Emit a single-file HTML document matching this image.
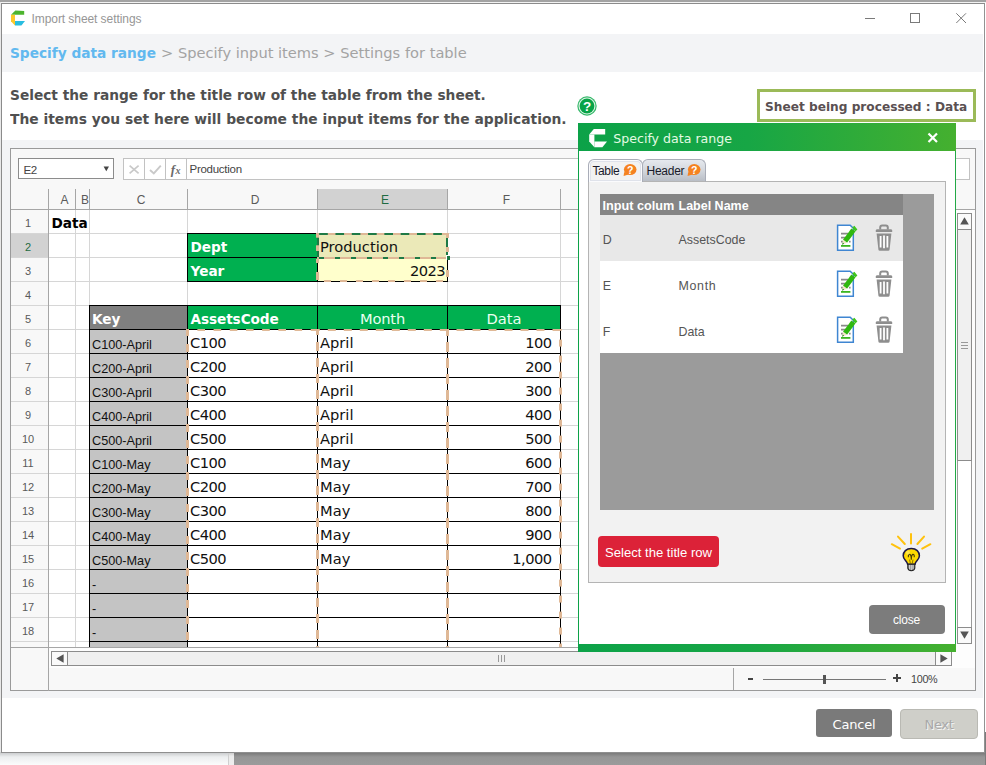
<!DOCTYPE html>
<html lang="en"><head><meta charset="utf-8"><title>Import sheet settings</title>
<style>
*{box-sizing:border-box;margin:0;padding:0}
html,body{width:986px;height:765px;overflow:hidden;background:#fff}
body{position:relative;font-family:"Liberation Sans",sans-serif;font-size:13px;color:#444}
.a{position:absolute}
.t{position:absolute;white-space:pre;line-height:1}
.mb{font-family:"DejaVu Sans","Liberation Sans",sans-serif;font-weight:bold}
.mr{font-family:"DejaVu Sans","Liberation Sans",sans-serif}
.seg{font-family:"Liberation Sans",sans-serif}
#bgtop{left:0;top:0;width:986px;height:2px;background:#a3a3a3}
#bgbot{left:0;top:752px;width:986px;height:13px;background:linear-gradient(#747474,#969696 5px,#9b9b9b)}
#bgbotl{left:0;top:752px;width:228px;height:13px;background:linear-gradient(#c4c6c8,#eceeef 5px,#fbfbfb)}
#bgbotd{left:228px;top:752px;width:6px;height:13px;background:linear-gradient(#c4c4c4,#eaeaea 4px,#efefef);border-left:1px solid #cfcfcf}
#win{left:1px;top:3px;width:984px;height:750px;border:1px solid #8b8b8b;border-right-color:#929292;border-bottom-color:#8f8f8f;background:#fff}
.band{background:#f3f4f6}
#ss{left:10px;top:148px;width:966px;height:543px;border:1px solid #9a9a9a;background:#f8f8f8}
.gl{position:absolute;background:#d6d6d6}
.hl{position:absolute;background:#a6a6a6}
.bk{position:absolute;background:#000}
.dash{position:absolute}
</style></head>
<body>
<div class="a" id="bgtop"></div>
<div class="a" style="left:0;top:2px;width:986px;height:1px;background:#f2f2f2"></div>
<div class="a" style="left:0;top:2px;width:1px;height:750px;background:#e8e8e8"></div>
<div class="a" id="bgbot"></div><div class="a" id="bgbotl"></div><div class="a" id="bgbotd"></div>
<div class="a" style="left:985px;top:732px;width:1px;height:33px;background:#7c7c7c"></div>
<div class="a" id="win"></div>
<svg class="a" style="left:11px;top:10px" width="15" height="16" viewBox="0 0 15 16">
<polygon points="0,4.8 4.4,0.4 13.2,1 13.2,4.8" fill="#4db52e"/>
<polygon points="0,4.8 4,4.8 4,15.4 0,11.2" fill="#fdc92b"/>
<polygon points="4,11 14,11 10.4,15.4 4,15.4" fill="#29bde0"/>
</svg>
<div class="t seg" style="left:31.5px;top:13px;font-size:12px;color:#969696;letter-spacing:-0.07px;">Import sheet settings</div>
<svg class="a" style="left:860px;top:8px" width="112" height="20" viewBox="0 0 112 20">
<path d="M5 10.5H15" stroke="#7a7a7a" stroke-width="1" fill="none"/>
<rect x="50.5" y="5.5" width="9" height="9" stroke="#7a7a7a" stroke-width="1" fill="none"/>
<path d="M96.3 5.3L106 15M106 5.3L96.3 15" stroke="#7a7a7a" stroke-width="1" fill="none"/>
</svg>
<div class="a band" style="left:2px;top:34px;width:981px;height:38px"></div>
<div class="a band" style="left:2px;top:140px;width:981px;height:558px"></div>
<div class="t mb" style="left:10px;top:47px;font-size:13.71px;color:#62b9ef;font-weight:bold;transform:scaleY(1.07);transform-origin:0 11.60px;">Specify data range</div>
<div class="t mr" style="left:161px;top:46px;font-size:14.64px;color:#a3a3a3;">&gt; Specify input items &gt; Settings for table</div>
<div class="t mb" style="left:10px;top:89px;font-size:13.74px;color:#505050;font-weight:bold;transform:scaleY(1.07);transform-origin:0 11.62px;">Select the range for the title row of the table from the sheet.</div>
<div class="t mb" style="left:10px;top:113px;font-size:13.85px;color:#505050;font-weight:bold;transform:scaleY(1.06);transform-origin:0 11.72px;">The items you set here will become the input items for the application.</div>
<svg class="a" style="left:576px;top:95px" width="22" height="22" viewBox="0 0 22 22">
<circle cx="11" cy="11" r="9.7" fill="#35b86a"/><circle cx="11" cy="11" r="8.5" fill="#dff4e6"/><circle cx="11" cy="11" r="7.4" fill="#08a347"/>
<text x="11" y="15.9" text-anchor="middle" font-family="Liberation Sans, sans-serif" font-weight="bold" font-size="13.5" fill="#fff">?</text></svg>
<div class="a" style="left:757px;top:89px;width:219px;height:33px;border:3px solid #9bba58;background:#fff"></div>
<div class="t mb" style="left:765px;top:101px;font-size:12.17px;color:#5a5052;font-weight:bold;">Sheet being processed : Data</div>
<div class="a" id="ss"></div>
<div class="a" style="left:18px;top:158px;width:96px;height:21px;border:1px solid #8c8c8c;background:#fff"></div>
<div class="t seg" style="left:23.5px;top:164px;font-size:11.6px;color:#444;letter-spacing:-0.4px;">E2</div>
<svg class="a" style="left:103px;top:166px" width="7" height="6" viewBox="0 0 7 6"><polygon points="0.6,0.6 6,0.6 3.3,5.2" fill="#444"/></svg>
<div class="a" style="left:123px;top:158px;width:847px;height:22px;border:1px solid #c2c2c2;background:#fff"></div>
<div class="a" style="left:144px;top:159px;width:1px;height:20px;background:#c2c2c2"></div>
<div class="a" style="left:165px;top:159px;width:1px;height:20px;background:#c2c2c2"></div>
<div class="a" style="left:186px;top:159px;width:1px;height:20px;background:#c2c2c2"></div>
<svg class="a" style="left:124px;top:159px" width="62" height="20" viewBox="0 0 62 20">
<path d="M5.6 6.6L14.6 14.4M14.6 6.6L5.6 14.4" stroke="#c9c9c9" stroke-width="1.7" fill="none"/>
<path d="M26 11L29.8 14.4L36.8 6.6" stroke="#c9c9c9" stroke-width="1.9" fill="none"/>
<text x="46.8" y="14.6" font-family="Liberation Serif, serif" font-style="italic" font-weight="bold" font-size="13" fill="#6a6a6a">f</text>
<text x="51.6" y="14.9" font-family="Liberation Serif, serif" font-style="italic" font-weight="bold" font-size="10" fill="#6a6a6a">x</text>
</svg>
<div class="t seg" style="left:189.5px;top:164px;font-size:11.5px;color:#444;letter-spacing:-0.27px;">Production</div>
<div class="a" style="left:49px;top:210px;width:907px;height:437px;background:#fff"></div>
<div class="a" style="left:318px;top:189px;width:129px;height:20px;background:#d2d2d2"></div>
<div class="a" style="left:11px;top:234px;width:37px;height:23px;background:#d2d2d2"></div>
<div class="hl" style="left:48px;top:189px;width:1px;height:20px"></div>
<div class="hl" style="left:75px;top:189px;width:1px;height:20px"></div>
<div class="hl" style="left:89px;top:189px;width:1px;height:20px"></div>
<div class="hl" style="left:187px;top:189px;width:1px;height:20px"></div>
<div class="hl" style="left:317px;top:189px;width:1px;height:20px"></div>
<div class="hl" style="left:447px;top:189px;width:1px;height:20px"></div>
<div class="hl" style="left:560px;top:189px;width:1px;height:20px"></div>
<div class="t seg" style="left:51.5px;top:194px;font-size:12px;color:#5a5a5a;width:26px;text-align:center;">A</div>
<div class="t seg" style="left:78.5px;top:194px;font-size:12px;color:#5a5a5a;width:13px;text-align:center;">B</div>
<div class="t seg" style="left:92.5px;top:194px;font-size:12px;color:#5a5a5a;width:97px;text-align:center;">C</div>
<div class="t seg" style="left:190.5px;top:194px;font-size:12px;color:#5a5a5a;width:129px;text-align:center;">D</div>
<div class="t seg" style="left:320.5px;top:194px;font-size:12px;color:#1f6b42;width:129px;text-align:center;">E</div>
<div class="t seg" style="left:450.5px;top:194px;font-size:12px;color:#5a5a5a;width:112px;text-align:center;">F</div>
<div class="gl" style="left:11px;top:233px;width:945px;height:1px"></div>
<div class="gl" style="left:11px;top:257px;width:945px;height:1px"></div>
<div class="gl" style="left:11px;top:281px;width:945px;height:1px"></div>
<div class="gl" style="left:11px;top:305px;width:945px;height:1px"></div>
<div class="gl" style="left:11px;top:329px;width:945px;height:1px"></div>
<div class="gl" style="left:11px;top:353px;width:945px;height:1px"></div>
<div class="gl" style="left:11px;top:377px;width:945px;height:1px"></div>
<div class="gl" style="left:11px;top:401px;width:945px;height:1px"></div>
<div class="gl" style="left:11px;top:425px;width:945px;height:1px"></div>
<div class="gl" style="left:11px;top:449px;width:945px;height:1px"></div>
<div class="gl" style="left:11px;top:473px;width:945px;height:1px"></div>
<div class="gl" style="left:11px;top:497px;width:945px;height:1px"></div>
<div class="gl" style="left:11px;top:521px;width:945px;height:1px"></div>
<div class="gl" style="left:11px;top:545px;width:945px;height:1px"></div>
<div class="gl" style="left:11px;top:569px;width:945px;height:1px"></div>
<div class="gl" style="left:11px;top:593px;width:945px;height:1px"></div>
<div class="gl" style="left:11px;top:617px;width:945px;height:1px"></div>
<div class="gl" style="left:11px;top:641px;width:945px;height:1px"></div>
<div class="gl" style="left:75px;top:210px;width:1px;height:437px"></div>
<div class="gl" style="left:89px;top:210px;width:1px;height:437px"></div>
<div class="gl" style="left:187px;top:210px;width:1px;height:437px"></div>
<div class="gl" style="left:317px;top:210px;width:1px;height:437px"></div>
<div class="gl" style="left:447px;top:210px;width:1px;height:437px"></div>
<div class="gl" style="left:560px;top:210px;width:1px;height:437px"></div>
<div class="hl" style="left:11px;top:209px;width:964px;height:1px"></div>
<div class="hl" style="left:48px;top:189px;width:1px;height:502px"></div>
<div class="hl" style="left:11px;top:647px;width:945px;height:1px"></div>
<div class="t seg" style="left:9.5px;top:218px;font-size:11px;color:#5a5a5a;width:37px;text-align:center;">1</div>
<div class="t seg" style="left:9.5px;top:242px;font-size:11px;color:#1f6b42;width:37px;text-align:center;">2</div>
<div class="t seg" style="left:9.5px;top:266px;font-size:11px;color:#5a5a5a;width:37px;text-align:center;">3</div>
<div class="t seg" style="left:9.5px;top:290px;font-size:11px;color:#5a5a5a;width:37px;text-align:center;">4</div>
<div class="t seg" style="left:9.5px;top:314px;font-size:11px;color:#5a5a5a;width:37px;text-align:center;">5</div>
<div class="t seg" style="left:9.5px;top:338px;font-size:11px;color:#5a5a5a;width:37px;text-align:center;">6</div>
<div class="t seg" style="left:9.5px;top:362px;font-size:11px;color:#5a5a5a;width:37px;text-align:center;">7</div>
<div class="t seg" style="left:9.5px;top:386px;font-size:11px;color:#5a5a5a;width:37px;text-align:center;">8</div>
<div class="t seg" style="left:9.5px;top:410px;font-size:11px;color:#5a5a5a;width:37px;text-align:center;">9</div>
<div class="t seg" style="left:9.5px;top:434px;font-size:11px;color:#5a5a5a;width:37px;text-align:center;">10</div>
<div class="t seg" style="left:9.5px;top:458px;font-size:11px;color:#5a5a5a;width:37px;text-align:center;">11</div>
<div class="t seg" style="left:9.5px;top:482px;font-size:11px;color:#5a5a5a;width:37px;text-align:center;">12</div>
<div class="t seg" style="left:9.5px;top:506px;font-size:11px;color:#5a5a5a;width:37px;text-align:center;">13</div>
<div class="t seg" style="left:9.5px;top:530px;font-size:11px;color:#5a5a5a;width:37px;text-align:center;">14</div>
<div class="t seg" style="left:9.5px;top:554px;font-size:11px;color:#5a5a5a;width:37px;text-align:center;">15</div>
<div class="t seg" style="left:9.5px;top:578px;font-size:11px;color:#5a5a5a;width:37px;text-align:center;">16</div>
<div class="t seg" style="left:9.5px;top:602px;font-size:11px;color:#5a5a5a;width:37px;text-align:center;">17</div>
<div class="t seg" style="left:9.5px;top:626px;font-size:11px;color:#5a5a5a;width:37px;text-align:center;">18</div>
<div class="t mb" style="left:51.5px;top:217px;font-size:13.66px;color:#000;font-weight:bold;transform:scaleY(1.06);transform-origin:0 11.56px;">Data</div>
<div class="a" style="left:187px;top:233px;width:261px;height:49px;background:#000"></div>
<div class="a" style="left:188px;top:234px;width:129px;height:23px;background:#00b050"></div>
<div class="a" style="left:188px;top:258px;width:129px;height:23px;background:#00b050"></div>
<div class="t mb" style="left:190.5px;top:241px;font-size:13.66px;color:#fff;font-weight:bold;transform:scaleY(1.06);transform-origin:0 11.56px;">Dept</div>
<div class="t mb" style="left:190.5px;top:265px;font-size:13.66px;color:#fff;font-weight:bold;transform:scaleY(1.06);transform-origin:0 11.56px;">Year</div>
<div class="a" style="left:318px;top:234px;width:129px;height:23px;background:#ebe9b8"></div>
<div class="a" style="left:318px;top:258px;width:129px;height:23px;background:#ffffcc"></div>
<div class="t mr" style="left:320px;top:240px;font-size:14.66px;color:#111;">Production</div>
<div class="t mr" style="left:344px;top:264px;font-size:14.66px;color:#111;letter-spacing:-0.6px;width:101px;text-align:right;">2023</div>
<div class="a" style="left:89px;top:305px;width:472px;height:25px;background:#000"></div>
<div class="a" style="left:90px;top:306px;width:97px;height:23px;background:#808080"></div>
<div class="a" style="left:188px;top:306px;width:129px;height:23px;background:#00b050"></div>
<div class="a" style="left:318px;top:306px;width:129px;height:23px;background:#00b050"></div>
<div class="a" style="left:448px;top:306px;width:112px;height:23px;background:#00b050"></div>
<div class="t mb" style="left:92px;top:313px;font-size:13.66px;color:#fff;font-weight:bold;transform:scaleY(1.06);transform-origin:0 11.56px;">Key</div>
<div class="t mb" style="left:190.5px;top:313px;font-size:13.66px;color:#fff;font-weight:bold;letter-spacing:-0.1px;transform:scaleY(1.06);transform-origin:0 11.56px;">AssetsCode</div>
<div class="t mr" style="left:318px;top:312px;font-size:14.66px;color:#eafff0;letter-spacing:-0.2px;width:129px;text-align:center;">Month</div>
<div class="t mr" style="left:448px;top:312px;font-size:14.66px;color:#eafff0;width:112px;text-align:center;">Data</div>
<div class="a" style="left:89px;top:329px;width:472px;height:318px;background:#000"></div>
<div class="a" style="left:90px;top:330px;width:97px;height:23px;background:#c4c4c4"></div>
<div class="a" style="left:188px;top:330px;width:129px;height:23px;background:#fff"></div>
<div class="a" style="left:318px;top:330px;width:129px;height:23px;background:#fff"></div>
<div class="a" style="left:448px;top:330px;width:112px;height:23px;background:#fff"></div>
<div class="t seg" style="left:92px;top:339px;font-size:12.7px;color:#111;">C100-April</div>
<div class="t mr" style="left:190px;top:336px;font-size:14.66px;color:#111;letter-spacing:-0.55px;">C100</div>
<div class="t mr" style="left:320px;top:336px;font-size:14.66px;color:#111;">April</div>
<div class="t mr" style="left:448px;top:336px;font-size:14.66px;color:#111;letter-spacing:-0.55px;width:103.5px;text-align:right;">100</div>
<div class="a" style="left:90px;top:354px;width:97px;height:23px;background:#c4c4c4"></div>
<div class="a" style="left:188px;top:354px;width:129px;height:23px;background:#fff"></div>
<div class="a" style="left:318px;top:354px;width:129px;height:23px;background:#fff"></div>
<div class="a" style="left:448px;top:354px;width:112px;height:23px;background:#fff"></div>
<div class="t seg" style="left:92px;top:363px;font-size:12.7px;color:#111;">C200-April</div>
<div class="t mr" style="left:190px;top:360px;font-size:14.66px;color:#111;letter-spacing:-0.55px;">C200</div>
<div class="t mr" style="left:320px;top:360px;font-size:14.66px;color:#111;">April</div>
<div class="t mr" style="left:448px;top:360px;font-size:14.66px;color:#111;letter-spacing:-0.55px;width:103.5px;text-align:right;">200</div>
<div class="a" style="left:90px;top:378px;width:97px;height:23px;background:#c4c4c4"></div>
<div class="a" style="left:188px;top:378px;width:129px;height:23px;background:#fff"></div>
<div class="a" style="left:318px;top:378px;width:129px;height:23px;background:#fff"></div>
<div class="a" style="left:448px;top:378px;width:112px;height:23px;background:#fff"></div>
<div class="t seg" style="left:92px;top:387px;font-size:12.7px;color:#111;">C300-April</div>
<div class="t mr" style="left:190px;top:384px;font-size:14.66px;color:#111;letter-spacing:-0.55px;">C300</div>
<div class="t mr" style="left:320px;top:384px;font-size:14.66px;color:#111;">April</div>
<div class="t mr" style="left:448px;top:384px;font-size:14.66px;color:#111;letter-spacing:-0.55px;width:103.5px;text-align:right;">300</div>
<div class="a" style="left:90px;top:402px;width:97px;height:23px;background:#c4c4c4"></div>
<div class="a" style="left:188px;top:402px;width:129px;height:23px;background:#fff"></div>
<div class="a" style="left:318px;top:402px;width:129px;height:23px;background:#fff"></div>
<div class="a" style="left:448px;top:402px;width:112px;height:23px;background:#fff"></div>
<div class="t seg" style="left:92px;top:411px;font-size:12.7px;color:#111;">C400-April</div>
<div class="t mr" style="left:190px;top:408px;font-size:14.66px;color:#111;letter-spacing:-0.55px;">C400</div>
<div class="t mr" style="left:320px;top:408px;font-size:14.66px;color:#111;">April</div>
<div class="t mr" style="left:448px;top:408px;font-size:14.66px;color:#111;letter-spacing:-0.55px;width:103.5px;text-align:right;">400</div>
<div class="a" style="left:90px;top:426px;width:97px;height:23px;background:#c4c4c4"></div>
<div class="a" style="left:188px;top:426px;width:129px;height:23px;background:#fff"></div>
<div class="a" style="left:318px;top:426px;width:129px;height:23px;background:#fff"></div>
<div class="a" style="left:448px;top:426px;width:112px;height:23px;background:#fff"></div>
<div class="t seg" style="left:92px;top:435px;font-size:12.7px;color:#111;">C500-April</div>
<div class="t mr" style="left:190px;top:432px;font-size:14.66px;color:#111;letter-spacing:-0.55px;">C500</div>
<div class="t mr" style="left:320px;top:432px;font-size:14.66px;color:#111;">April</div>
<div class="t mr" style="left:448px;top:432px;font-size:14.66px;color:#111;letter-spacing:-0.55px;width:103.5px;text-align:right;">500</div>
<div class="a" style="left:90px;top:450px;width:97px;height:23px;background:#c4c4c4"></div>
<div class="a" style="left:188px;top:450px;width:129px;height:23px;background:#fff"></div>
<div class="a" style="left:318px;top:450px;width:129px;height:23px;background:#fff"></div>
<div class="a" style="left:448px;top:450px;width:112px;height:23px;background:#fff"></div>
<div class="t seg" style="left:92px;top:459px;font-size:12.7px;color:#111;">C100-May</div>
<div class="t mr" style="left:190px;top:456px;font-size:14.66px;color:#111;letter-spacing:-0.55px;">C100</div>
<div class="t mr" style="left:320px;top:456px;font-size:14.66px;color:#111;">May</div>
<div class="t mr" style="left:448px;top:456px;font-size:14.66px;color:#111;letter-spacing:-0.55px;width:103.5px;text-align:right;">600</div>
<div class="a" style="left:90px;top:474px;width:97px;height:23px;background:#c4c4c4"></div>
<div class="a" style="left:188px;top:474px;width:129px;height:23px;background:#fff"></div>
<div class="a" style="left:318px;top:474px;width:129px;height:23px;background:#fff"></div>
<div class="a" style="left:448px;top:474px;width:112px;height:23px;background:#fff"></div>
<div class="t seg" style="left:92px;top:483px;font-size:12.7px;color:#111;">C200-May</div>
<div class="t mr" style="left:190px;top:480px;font-size:14.66px;color:#111;letter-spacing:-0.55px;">C200</div>
<div class="t mr" style="left:320px;top:480px;font-size:14.66px;color:#111;">May</div>
<div class="t mr" style="left:448px;top:480px;font-size:14.66px;color:#111;letter-spacing:-0.55px;width:103.5px;text-align:right;">700</div>
<div class="a" style="left:90px;top:498px;width:97px;height:23px;background:#c4c4c4"></div>
<div class="a" style="left:188px;top:498px;width:129px;height:23px;background:#fff"></div>
<div class="a" style="left:318px;top:498px;width:129px;height:23px;background:#fff"></div>
<div class="a" style="left:448px;top:498px;width:112px;height:23px;background:#fff"></div>
<div class="t seg" style="left:92px;top:507px;font-size:12.7px;color:#111;">C300-May</div>
<div class="t mr" style="left:190px;top:504px;font-size:14.66px;color:#111;letter-spacing:-0.55px;">C300</div>
<div class="t mr" style="left:320px;top:504px;font-size:14.66px;color:#111;">May</div>
<div class="t mr" style="left:448px;top:504px;font-size:14.66px;color:#111;letter-spacing:-0.55px;width:103.5px;text-align:right;">800</div>
<div class="a" style="left:90px;top:522px;width:97px;height:23px;background:#c4c4c4"></div>
<div class="a" style="left:188px;top:522px;width:129px;height:23px;background:#fff"></div>
<div class="a" style="left:318px;top:522px;width:129px;height:23px;background:#fff"></div>
<div class="a" style="left:448px;top:522px;width:112px;height:23px;background:#fff"></div>
<div class="t seg" style="left:92px;top:531px;font-size:12.7px;color:#111;">C400-May</div>
<div class="t mr" style="left:190px;top:528px;font-size:14.66px;color:#111;letter-spacing:-0.55px;">C400</div>
<div class="t mr" style="left:320px;top:528px;font-size:14.66px;color:#111;">May</div>
<div class="t mr" style="left:448px;top:528px;font-size:14.66px;color:#111;letter-spacing:-0.55px;width:103.5px;text-align:right;">900</div>
<div class="a" style="left:90px;top:546px;width:97px;height:23px;background:#c4c4c4"></div>
<div class="a" style="left:188px;top:546px;width:129px;height:23px;background:#fff"></div>
<div class="a" style="left:318px;top:546px;width:129px;height:23px;background:#fff"></div>
<div class="a" style="left:448px;top:546px;width:112px;height:23px;background:#fff"></div>
<div class="t seg" style="left:92px;top:555px;font-size:12.7px;color:#111;">C500-May</div>
<div class="t mr" style="left:190px;top:552px;font-size:14.66px;color:#111;letter-spacing:-0.55px;">C500</div>
<div class="t mr" style="left:320px;top:552px;font-size:14.66px;color:#111;">May</div>
<div class="t mr" style="left:448px;top:552px;font-size:14.66px;color:#111;letter-spacing:-0.55px;width:103.5px;text-align:right;">1,000</div>
<div class="a" style="left:90px;top:570px;width:97px;height:23px;background:#c4c4c4"></div>
<div class="a" style="left:188px;top:570px;width:129px;height:23px;background:#fff"></div>
<div class="a" style="left:318px;top:570px;width:129px;height:23px;background:#fff"></div>
<div class="a" style="left:448px;top:570px;width:112px;height:23px;background:#fff"></div>
<div class="t seg" style="left:92px;top:579px;font-size:12.7px;color:#111;">-</div>
<div class="a" style="left:90px;top:594px;width:97px;height:23px;background:#c4c4c4"></div>
<div class="a" style="left:188px;top:594px;width:129px;height:23px;background:#fff"></div>
<div class="a" style="left:318px;top:594px;width:129px;height:23px;background:#fff"></div>
<div class="a" style="left:448px;top:594px;width:112px;height:23px;background:#fff"></div>
<div class="t seg" style="left:92px;top:603px;font-size:12.7px;color:#111;">-</div>
<div class="a" style="left:90px;top:618px;width:97px;height:23px;background:#c4c4c4"></div>
<div class="a" style="left:188px;top:618px;width:129px;height:23px;background:#fff"></div>
<div class="a" style="left:318px;top:618px;width:129px;height:23px;background:#fff"></div>
<div class="a" style="left:448px;top:618px;width:112px;height:23px;background:#fff"></div>
<div class="t seg" style="left:92px;top:627px;font-size:12.7px;color:#111;">-</div>
<div class="a" style="left:90px;top:642px;width:97px;height:5px;background:#c4c4c4"></div>
<div class="a" style="left:188px;top:642px;width:129px;height:5px;background:#fff"></div>
<div class="a" style="left:318px;top:642px;width:129px;height:5px;background:#fff"></div>
<div class="a" style="left:448px;top:642px;width:112px;height:5px;background:#fff"></div>
<div class="dash" style="left:186.2px;top:329px;width:2.4px;height:318px;background:linear-gradient(180deg,#dfb896 0 8px,transparent 8px) 0 15px/100% 16px repeat-y"></div>
<div class="dash" style="left:316px;top:329px;width:2.6px;height:318px;background:linear-gradient(180deg,#dfb896 0 9.5px,transparent 9.5px) 0 13px/100% 16px repeat-y"></div>
<div class="dash" style="left:446px;top:329px;width:2.6px;height:318px;background:linear-gradient(180deg,#dfb896 0 10.3px,transparent 10.3px) 0 13px/100% 16px repeat-y"></div>
<div class="dash" style="left:559.3px;top:329px;width:2.4px;height:318px;background:linear-gradient(180deg,#dfb896 0 7.5px,transparent 7.5px) 0 10.600000000000023px/100% 16px repeat-y"></div>
<div class="dash" style="left:187px;top:329px;width:130px;height:2px;background:linear-gradient(90deg,#dfb896 0 7.8px,transparent 7.8px) 10.400000000000006px 0/16.2px 100% repeat-x"></div>
<div class="dash" style="left:319px;top:329px;width:128px;height:2px;background:linear-gradient(90deg,#dfb896 0 8.2px,transparent 8.2px) 8.800000000000011px 0/16px 100% repeat-x"></div>
<div class="dash" style="left:447px;top:329px;width:115px;height:2px;background:linear-gradient(90deg,#dfb896 0 8.3px,transparent 8.3px) 9.5px 0/16px 100% repeat-x"></div>
<div class="a" style="left:317px;top:232.5px;width:132px;height:2px;background:#1e7a46"></div>
<div class="a" style="left:317px;top:256.5px;width:132px;height:2px;background:#1e7a46"></div>
<div class="a" style="left:316.6px;top:233px;width:2px;height:24px;background:#1e7a46"></div>
<div class="a" style="left:446.4px;top:233px;width:2px;height:24px;background:#1e7a46"></div>
<div class="dash" style="left:317px;top:232.5px;width:132px;height:2px;background:linear-gradient(90deg,#dfb896 0 7.3px,transparent 7.3px) 10.800000000000011px 0/16.3px 100% repeat-x"></div>
<div class="dash" style="left:317px;top:256.5px;width:132px;height:2px;background:linear-gradient(90deg,#dfb896 0 11px,transparent 11px) 7px 0/16px 100% repeat-x"></div>
<div class="dash" style="left:317px;top:280.3px;width:132px;height:2px;background:linear-gradient(90deg,#dfb896 0 7px,transparent 7px) 7px 0/16px 100% repeat-x"></div>
<div class="dash" style="left:316.4px;top:233px;width:2.2px;height:24px;background:linear-gradient(180deg,#dfb896 0 6px,transparent 6px) 0 12.3px/100% 13.3px repeat-y"></div>
<div class="a" style="left:316.2px;top:259px;width:2.4px;height:4.4px;background:#dfb896"></div>
<div class="a" style="left:316.2px;top:272.4px;width:2.4px;height:7.4px;background:#dfb896"></div>
<div class="dash" style="left:446.4px;top:233px;width:2.2px;height:24px;background:linear-gradient(180deg,#dfb896 0 5px,transparent 5px) 0 0px/100% 14px repeat-y"></div>
<div class="a" style="left:446.2px;top:269.5px;width:2.4px;height:7.5px;background:#dfb896"></div>
<div class="a" style="left:445.6px;top:255.2px;width:4.6px;height:4.8px;background:#1e7a45;border-left:1px solid #fff;border-top:1px solid #fff"></div>
<div class="a" style="left:956px;top:210px;width:19px;height:438px;background:#fdfdfd"></div>
<div class="a" style="left:957px;top:213px;width:15px;height:431px;border:1px solid #9a9a9a;background:#fff"></div>
<div class="a" style="left:957px;top:213px;width:15px;height:17px;border:1px solid #8c8c8c;background:#fafafa"></div>
<div class="a" style="left:957px;top:229px;width:15px;height:232px;border:1px solid #8c8c8c;background:#f0f0f0"></div>
<div class="a" style="left:957px;top:627px;width:15px;height:17px;border:1px solid #8c8c8c;background:#fafafa"></div>
<svg class="a" style="left:960px;top:217px" width="9" height="8" viewBox="0 0 9 8"><polygon points="4.5,0.3 8.8,7.6 0.2,7.6" fill="#555"/></svg>
<svg class="a" style="left:960px;top:631px" width="9" height="8" viewBox="0 0 9 8"><polygon points="4.5,7.7 8.8,0.4 0.2,0.4" fill="#555"/></svg>
<div class="a" style="left:961px;top:342px;width:7px;height:1px;background:#999;box-shadow:0 3px 0 #999,0 6px 0 #999"></div>
<div class="a" style="left:11px;top:648px;width:964px;height:42px;background:#f8f8f8"></div>
<div class="a" style="left:49px;top:648px;width:926px;height:20px;background:#fdfdfd"></div>
<div class="hl" style="left:48px;top:648px;width:1px;height:42px"></div>
<div class="a" style="left:51px;top:651px;width:17px;height:15px;border:1px solid #8c8c8c;background:#fafafa"></div>
<div class="a" style="left:935px;top:651px;width:17px;height:15px;border:1px solid #8c8c8c;background:#fafafa"></div>
<div class="a" style="left:67px;top:651px;width:869px;height:15px;border:1px solid #8c8c8c;background:#f0f0f0"></div>
<svg class="a" style="left:56px;top:654px" width="8" height="9" viewBox="0 0 8 9"><polygon points="0.3,4.5 7.6,0.2 7.6,8.8" fill="#555"/></svg>
<svg class="a" style="left:940px;top:654px" width="8" height="9" viewBox="0 0 8 9"><polygon points="7.7,4.5 0.4,0.2 0.4,8.8" fill="#555"/></svg>
<div class="a" style="left:498px;top:655px;width:1px;height:7px;background:#999;box-shadow:3px 0 0 #999,6px 0 0 #999"></div>
<div class="hl" style="left:733px;top:668px;width:1px;height:22px"></div>
<div class="a" style="left:748px;top:678px;width:5px;height:2px;background:#444"></div>
<div class="a" style="left:763px;top:679px;width:123px;height:1px;background:#777"></div>
<div class="a" style="left:823px;top:675px;width:3px;height:9px;background:#555"></div>
<div class="a" style="left:893px;top:677px;width:8px;height:2px;background:#444"></div><div class="a" style="left:896px;top:674px;width:2px;height:8px;background:#444"></div>
<div class="t seg" style="left:911px;top:674px;font-size:10.8px;color:#444;letter-spacing:-0.3px;">100%</div>
<div class="a" style="left:816px;top:709px;width:76px;height:28px;background:#7a7a7a;border-radius:3px"></div>
<div class="t mr" style="left:816px;top:718px;font-size:13px;color:#fff;letter-spacing:-0.2px;width:76px;text-align:center;">Cancel</div>
<div class="a" style="left:900px;top:709px;width:78px;height:30px;background:#cfcfc9;border:1px solid #b9b9b3;border-radius:4px"></div>
<div class="t mr" style="left:900px;top:718px;font-size:13px;color:#a9a9a9;letter-spacing:-0.3px;width:78px;text-align:center;text-shadow:1px 1px 0 #f4f4f4;">Next</div>
<div class="a" style="left:578px;top:123px;width:378px;height:529px;background:linear-gradient(90deg,#0ca248 0%,#17a645 45%,#45b02f 100%)"></div>
<div class="a" style="left:955px;top:151px;width:1px;height:493px;background:#23a946"></div>
<div class="a" style="left:579px;top:151px;width:376px;height:493px;background:#fff"></div>
<svg class="a" style="left:589px;top:129px" width="19" height="19" viewBox="0 0 19 19">
<polygon points="0.2,5.6 4.8,0 16.2,0 16.2,5.6" fill="#fff"/>
<polygon points="0.2,5.6 5.4,5.6 5.4,18.2 0.2,12.5" fill="#fff"/>
<polygon points="5.4,12.5 18,12.5 13.4,18.2 5.4,18.2" fill="#fff"/>
</svg>
<div class="t mr" style="left:613.3px;top:133px;font-size:12.58px;color:#e4fbe4;">Specify data range</div>
<svg class="a" style="left:927px;top:132px" width="12" height="12" viewBox="0 0 12 12"><path d="M1.5 1.5L10 10M10 1.5L1.5 10" stroke="#fff" stroke-width="2.2" fill="none"/></svg>
<div class="a" style="left:588px;top:181px;width:358px;height:402px;border:1px solid #b4b4b4;background:#f2f2f2"></div>
<div class="a" style="left:642px;top:159px;width:64px;height:23px;border:1px solid #a9adb8;border-bottom:1px solid #b4b4b4;border-radius:6px 6px 0 0;background:linear-gradient(#e6e9ee,#d3d7dd 50%,#b9bec6)"></div>
<div class="a" style="left:588px;top:159px;width:55px;height:23px;border:1px solid #a9adb8;border-bottom:0;border-radius:6px 6px 0 0;background:#f2f2f2;box-shadow:inset 0 0 0 1px #fbfbfd, inset 0 0 0 2px #dfe2ea"></div>
<div class="t seg" style="left:592.5px;top:165px;font-size:12px;color:#1a1a2a;letter-spacing:-0.4px;">Table</div>
<div class="t seg" style="left:646.5px;top:165px;font-size:12px;color:#1a1a2a;letter-spacing:-0.25px;">Header</div>
<svg class="a" style="left:623px;top:164px" width="14" height="13" viewBox="0 0 14 13">
<ellipse cx="7.2" cy="5.6" rx="6.3" ry="5.5" fill="#f58220"/><polygon points="1.2,8 0.6,12 5.5,10.4" fill="#f58220"/>
<text x="7.2" y="9.5" text-anchor="middle" font-family="Liberation Sans, sans-serif" font-weight="bold" font-size="10.5" fill="#fff">?</text></svg>
<svg class="a" style="left:687px;top:164px" width="14" height="13" viewBox="0 0 14 13">
<ellipse cx="7.2" cy="5.6" rx="6.3" ry="5.5" fill="#f58220"/><polygon points="1.2,8 0.6,12 5.5,10.4" fill="#f58220"/>
<text x="7.2" y="9.5" text-anchor="middle" font-family="Liberation Sans, sans-serif" font-weight="bold" font-size="10.5" fill="#fff">?</text></svg>
<div class="a" style="left:600px;top:194px;width:334px;height:316px;background:#9b9b9b"></div>
<div class="a" style="left:600px;top:194px;width:303px;height:21px;background:#858585"></div>
<div class="t seg" style="left:602.5px;top:200px;font-size:12.7px;color:#fff;font-weight:bold;">Input colum</div>
<div class="t seg" style="left:678.5px;top:200px;font-size:12.5px;color:#fff;font-weight:bold;">Label Name</div>
<div class="a" style="left:600px;top:215px;width:303px;height:46px;background:#e8e8e8"></div>
<div class="t seg" style="left:602.8px;top:234px;font-size:12.4px;color:#555;">D</div>
<div class="t seg" style="left:678.5px;top:234px;font-size:12.4px;color:#555;">AssetsCode</div>
<svg class="a" style="left:836px;top:223px" width="22" height="28" viewBox="0 0 22 28">
<path d="M1.6 2.2H14.2L17.3 5.2V27.2H1.6Z" fill="#fff" stroke="#3f86d2" stroke-width="1.5"/>
<path d="M5 10.7H12M5 14.7H11M5 18.7H7.6M13 18.7H14.6" stroke="#8a8a8a" stroke-width="1.7"/>
<path d="M5 22.9H14.4" stroke="#3cb521" stroke-width="1.8"/>
<path d="M16.2 4.6L18.4 2.8L21.4 6.6L19.2 8.6Z" fill="#3fc41c"/>
<path d="M15.4 5.4L19.4 8.6L11 19.8L7 16.8Z" fill="#2fb80f"/>
<path d="M7 16.8L11 19.8L6 21.8Z" fill="#f3e6c8"/>
<path d="M6 21.8L6.8 19.6L8.2 20.8Z" fill="#2a8a2a"/>
</svg>
<svg class="a" style="left:875px;top:223px" width="18" height="28" viewBox="0 0 18 28">
<path d="M5.2 6.4V4.4Q5.2 2.4 7.2 2.4H10.8Q12.8 2.4 12.8 4.4V6.4" fill="none" stroke="#8e8e8e" stroke-width="2"/>
<path d="M0.8 9V7.6Q0.8 6.2 2.4 6.2H15.6Q17.2 6.2 17.2 7.6V9Z" fill="#8e8e8e"/>
<path d="M1.6 10.4H16.4L14.6 26.6Q14.5 27.8 13.2 27.8H4.8Q3.5 27.8 3.4 26.6Z" fill="#8e8e8e"/>
<path d="M5.6 13V24.6M9 12.4V25.2M12.4 13V24.6" stroke="#fff" stroke-width="1.8" fill="none"/>
</svg>
<div class="a" style="left:600px;top:261px;width:303px;height:46px;background:#fff"></div>
<div class="t seg" style="left:602.8px;top:280px;font-size:12.4px;color:#555;">E</div>
<div class="t seg" style="left:678.5px;top:280px;font-size:12.4px;color:#555;letter-spacing:0.7px;">Month</div>
<svg class="a" style="left:836px;top:269px" width="22" height="28" viewBox="0 0 22 28">
<path d="M1.6 2.2H14.2L17.3 5.2V27.2H1.6Z" fill="#fff" stroke="#3f86d2" stroke-width="1.5"/>
<path d="M5 10.7H12M5 14.7H11M5 18.7H7.6M13 18.7H14.6" stroke="#8a8a8a" stroke-width="1.7"/>
<path d="M5 22.9H14.4" stroke="#3cb521" stroke-width="1.8"/>
<path d="M16.2 4.6L18.4 2.8L21.4 6.6L19.2 8.6Z" fill="#3fc41c"/>
<path d="M15.4 5.4L19.4 8.6L11 19.8L7 16.8Z" fill="#2fb80f"/>
<path d="M7 16.8L11 19.8L6 21.8Z" fill="#f3e6c8"/>
<path d="M6 21.8L6.8 19.6L8.2 20.8Z" fill="#2a8a2a"/>
</svg>
<svg class="a" style="left:875px;top:269px" width="18" height="28" viewBox="0 0 18 28">
<path d="M5.2 6.4V4.4Q5.2 2.4 7.2 2.4H10.8Q12.8 2.4 12.8 4.4V6.4" fill="none" stroke="#8e8e8e" stroke-width="2"/>
<path d="M0.8 9V7.6Q0.8 6.2 2.4 6.2H15.6Q17.2 6.2 17.2 7.6V9Z" fill="#8e8e8e"/>
<path d="M1.6 10.4H16.4L14.6 26.6Q14.5 27.8 13.2 27.8H4.8Q3.5 27.8 3.4 26.6Z" fill="#8e8e8e"/>
<path d="M5.6 13V24.6M9 12.4V25.2M12.4 13V24.6" stroke="#fff" stroke-width="1.8" fill="none"/>
</svg>
<div class="a" style="left:600px;top:307px;width:303px;height:46px;background:#fff"></div>
<div class="t seg" style="left:602.8px;top:326px;font-size:12.4px;color:#555;">F</div>
<div class="t seg" style="left:678.5px;top:326px;font-size:12.4px;color:#555;">Data</div>
<svg class="a" style="left:836px;top:315px" width="22" height="28" viewBox="0 0 22 28">
<path d="M1.6 2.2H14.2L17.3 5.2V27.2H1.6Z" fill="#fff" stroke="#3f86d2" stroke-width="1.5"/>
<path d="M5 10.7H12M5 14.7H11M5 18.7H7.6M13 18.7H14.6" stroke="#8a8a8a" stroke-width="1.7"/>
<path d="M5 22.9H14.4" stroke="#3cb521" stroke-width="1.8"/>
<path d="M16.2 4.6L18.4 2.8L21.4 6.6L19.2 8.6Z" fill="#3fc41c"/>
<path d="M15.4 5.4L19.4 8.6L11 19.8L7 16.8Z" fill="#2fb80f"/>
<path d="M7 16.8L11 19.8L6 21.8Z" fill="#f3e6c8"/>
<path d="M6 21.8L6.8 19.6L8.2 20.8Z" fill="#2a8a2a"/>
</svg>
<svg class="a" style="left:875px;top:315px" width="18" height="28" viewBox="0 0 18 28">
<path d="M5.2 6.4V4.4Q5.2 2.4 7.2 2.4H10.8Q12.8 2.4 12.8 4.4V6.4" fill="none" stroke="#8e8e8e" stroke-width="2"/>
<path d="M0.8 9V7.6Q0.8 6.2 2.4 6.2H15.6Q17.2 6.2 17.2 7.6V9Z" fill="#8e8e8e"/>
<path d="M1.6 10.4H16.4L14.6 26.6Q14.5 27.8 13.2 27.8H4.8Q3.5 27.8 3.4 26.6Z" fill="#8e8e8e"/>
<path d="M5.6 13V24.6M9 12.4V25.2M12.4 13V24.6" stroke="#fff" stroke-width="1.8" fill="none"/>
</svg>
<div class="a" style="left:598px;top:536px;width:121px;height:31px;background:#dc2238;border-radius:4px"></div>
<div class="t seg" style="left:605px;top:546px;font-size:13.1px;color:#fff;">Select the title row</div>
<svg class="a" style="left:888px;top:530px" width="46" height="44" viewBox="0 0 46 44">
<g stroke="#ffc20e" stroke-width="2" stroke-linecap="round">
<path d="M23 4V13.4"/><path d="M10 6.6L16.8 14"/><path d="M36 6.6L29.4 14"/><path d="M3.8 14.2L12 18.6"/><path d="M42.4 14.2L34.2 18.6"/></g>
<path d="M23.3 18.4C18.2 18.4 15.2 21.8 15.2 25.8C15.2 29.8 19 30.8 19.6 34.2H27C27.6 30.8 31.4 29.8 31.4 25.8C31.4 21.8 28.4 18.4 23.3 18.4Z" fill="#ffd800" stroke="#1b1648" stroke-width="1.5"/>
<path d="M19.8 34.2H26.8V38.2Q26.2 40.6 23.3 40.8Q20.4 40.6 19.8 38.2Z" fill="#8a8a8a" stroke="#222" stroke-width="1.1"/>
<path d="M21.6 35V39.4M23.3 35V40M25 35V39.4" stroke="#e8e8e8" stroke-width="0.8" fill="none"/>
<path d="M20.4 27.2Q20 24.2 21.8 24.4Q23.2 24.8 23.3 29.8Q23.4 24.8 24.8 24.4Q26.6 24.2 26.2 27.2" stroke="#4a3c00" stroke-width="1.1" fill="none"/>
<path d="M21.6 29.6L22.4 33.6M25 29.6L24.2 33.6" stroke="#6b5a00" stroke-width="0.8" fill="none"/>
<ellipse cx="20" cy="22.6" rx="2" ry="2.2" fill="#fff27a" opacity="0.6"/>
</svg>
<div class="a" style="left:869px;top:605px;width:76px;height:29px;background:#7c7c7c;border-radius:4px"></div>
<div class="t seg" style="left:893px;top:614px;font-size:12px;color:#fff;letter-spacing:-0.2px;">close</div>
</body></html>
